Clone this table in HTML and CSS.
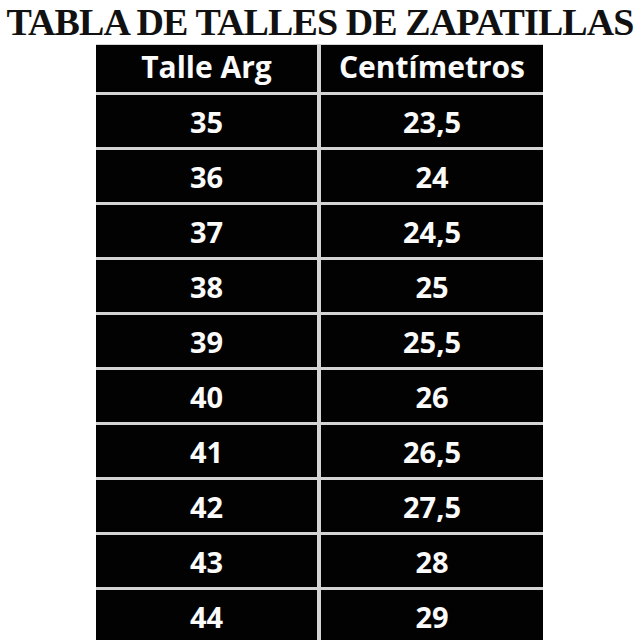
FILE: index.html
```html
<!DOCTYPE html>
<html lang="es">
<head>
<meta charset="utf-8">
<title>Tabla de talles de zapatillas</title>
<link rel="stylesheet" href="styles.css">
</head>
<body>
<h1 class="title">TABLA DE TALLES DE ZAPATILLAS</h1>
<div class="chart">
  <div class="cell head">Talle Arg</div><div class="cell head">Centímetros</div>
  <div class="cell">35</div><div class="cell">23,5</div>
  <div class="cell">36</div><div class="cell">24</div>
  <div class="cell">37</div><div class="cell">24,5</div>
  <div class="cell">38</div><div class="cell">25</div>
  <div class="cell">39</div><div class="cell">25,5</div>
  <div class="cell">40</div><div class="cell">26</div>
  <div class="cell">41</div><div class="cell">26,5</div>
  <div class="cell">42</div><div class="cell">27,5</div>
  <div class="cell">43</div><div class="cell">28</div>
  <div class="cell">44</div><div class="cell">29</div>
</div>
</body>
</html>
```
FILE: styles.css
```css
html, body {
  margin: 0;
  padding: 0;
  background: #ffffff;
  overflow: hidden;
}
body {
  width: 640px;
  height: 640px;
}
.title {
  margin: 0;
  height: 44px;
  font-family: "Liberation Serif", "Times New Roman", serif;
  font-weight: 700;
  font-size: 38px;
  line-height: 44px;
  letter-spacing: -0.9px;
  text-align: center;
  color: #111;
  white-space: nowrap;
}
.chart {
  margin-left: 96px;
  width: 447px;
  display: grid;
  grid-template-columns: 221px 222px;
  grid-template-rows: 47px;
  grid-auto-rows: 52px;
  gap: 3px 4px;
  background: #d4d4d4;
  border-top: 1px solid #d4d4d4;
}
.cell {
  background: #020202;
  color: #fbfbfb;
  font-family: "Open Sans", "Noto Sans", sans-serif;
  font-weight: 700;
  font-size: 29px;
  line-height: 1;
  display: flex;
  align-items: center;
  justify-content: center;
}
.head {
  font-size: 30px;
  padding-bottom: 3px;
  box-sizing: border-box;
}
```
